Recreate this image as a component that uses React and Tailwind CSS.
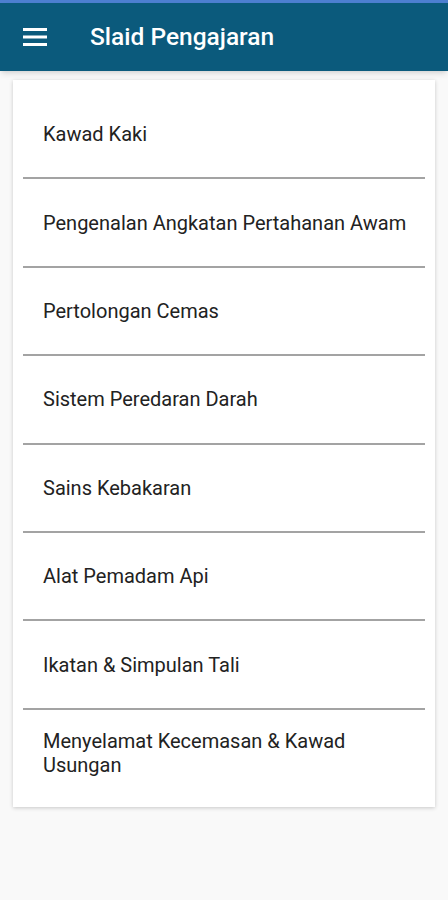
import React from 'react';

const topics = [
  'Kawad Kaki',
  'Pengenalan Angkatan Pertahanan Awam',
  'Pertolongan Cemas',
  'Sistem Peredaran Darah',
  'Sains Kebakaran',
  'Alat Pemadam Api',
  'Ikatan & Simpulan Tali',
  'Menyelamat Kecemasan & Kawad Usungan',
];

const App = () => {
  return (
    <div className="min-h-[900px] bg-[#f9f9f9] font-['Roboto',sans-serif]">
      <div className="h-[3px] bg-[#4d7fd0]" />
      <header className="flex h-[68px] items-center bg-[#0b5a7c] shadow-md">
        <svg className="ml-[23px] h-[20px] w-[24px]" viewBox="0 0 24 20">
          <rect x="0" y="1" width="24" height="3" fill="#fff" />
          <rect x="0" y="8.5" width="24" height="3" fill="#fff" />
          <rect x="0" y="16" width="24" height="3" fill="#fff" />
        </svg>
        <h1 className="ml-[43px] text-[24.5px] font-medium text-white">Slaid Pengajaran</h1>
      </header>

      <div className="mx-[13px] mt-[9px] bg-white pt-[11px] pb-[11px] shadow-[0_1px_4px_rgba(0,0,0,0.2)]">
        {topics.map((topic, index) => (
          <div key={index}>
            {index > 0 && <div className="mx-[10px] h-[2px] bg-[#a3a3a3]" />}
            <div className="flex min-h-[86.4px] items-center pl-[30px] pr-[20px] text-[20px] leading-[24px] text-[#222]">
              {topic}
            </div>
          </div>
        ))}
      </div>
    </div>
  );
};

export default App;
